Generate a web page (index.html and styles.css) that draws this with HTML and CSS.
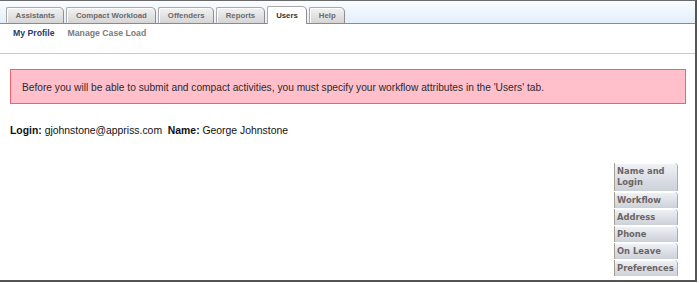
FILE: index.html
```html
<!DOCTYPE html>
<html>
<head>
<meta charset="utf-8">
<link rel="stylesheet" href="styles.css">
</head>
<body>
<div class="frame">
  <div class="tabbar">
    <div class="tab">Assistants</div>
    <div class="tab">Compact Workload</div>
    <div class="tab">Offenders</div>
    <div class="tab">Reports</div>
    <div class="tab active">Users</div>
    <div class="tab">Help</div>
  </div>
  <div class="subnav">
    <span class="sub current">My Profile</span>
    <span class="sub">Manage Case Load</span>
  </div>
  <div class="content">
    <div class="alert">Before you will be able to submit and compact activities, you must specify your workflow attributes in the 'Users' tab.</div>
    <div class="login"><b>Login:</b> gjohnstone@appriss.com&nbsp; <b>Name:</b> George Johnstone</div>
    <div class="sidewrap">
      <div class="sidetabs">
        <div class="stab two">Name and<br>Login</div>
        <div class="stab">Workflow</div>
        <div class="stab">Address</div>
        <div class="stab">Phone</div>
        <div class="stab">On Leave</div>
        <div class="stab">Preferences</div>
      </div>
    </div>
  </div>
</div>
</body>
</html>
```
FILE: styles.css
```css
html, body {
  margin: 0;
  padding: 0;
  background: #ffffff;
}
body {
  font-family: "Liberation Sans", Arial, sans-serif;
  color: #222;
}
.frame {
  width: 695px;
  height: 279px;
  border-top: 1px solid #6a6a6a;
  border-right: 2px solid #555555;
  border-bottom: 2px solid #555555;
  overflow: hidden;
}
.tabbar {
  height: 22px;
  border-bottom: 1px solid #8a8a8a;
  background: linear-gradient(#fbfdff, #e3eefb);
  display: flex;
  align-items: flex-end;
  gap: 2px;
  padding-left: 6px;
}
.tab {
  height: 15px;
  line-height: 15px;
  padding: 0 8.5px;
  border: 1px solid #a9a9a9;
  border-bottom: none;
  border-right-color: #8f8f8f;
  border-radius: 2px 5px 0 0;
  background: linear-gradient(#f2f2f2, #d5d5d5);
  box-shadow: inset 1px 1px 0 #ffffff;
  font-size: 7.8px;
  font-weight: bold;
  color: #6b6b6b;
  white-space: nowrap;
}
.tab.active {
  height: 17px;
  margin-bottom: -1px;
  background: #ffffff;
  color: #333333;
  line-height: 17px;
}
.subnav {
  padding: 3px 0 14px 13px;
  display: flex;
  gap: 13px;
  border-bottom: 1px solid #cdc8b9;
  line-height: 12px;
  font-size: 8.7px;
  font-weight: bold;
}
.sub {
  color: #7b7b7b;
}
.sub.current {
  color: #263a6c;
}
.content {
  padding: 15px 9px 0 10px;
}
.alert {
  background: #ffc0cb;
  border: 1px solid #e9646c;
  padding: 10.5px 11px 9.5px 11px;
  font-size: 10.2px;
  line-height: 13px;
  color: #2b2b2b;
}
.login {
  margin-top: 20px;
  font-size: 10.4px;
  line-height: 13px;
  color: #111;
}
.sidewrap {
  display: flex;
  justify-content: flex-end;
  padding-right: 8px;
  margin-top: 26px;
}
.sidetabs {
  display: flex;
  flex-direction: column;
  gap: 1px;
  width: 64px;
}
.stab {
  height: 16px;
  line-height: 16px;
  padding: 0 2px;
  border-left: 1px solid #a39d92;
  border-right: 1px solid #a8adb4;
  border-radius: 0 4px 0 0;
  background: linear-gradient(#f0f2f6, #ccd1d8);
  box-shadow: inset 0 1px 0 #ffffff;
  font-family: "DejaVu Sans", Verdana, sans-serif;
  font-size: 8.4px;
  font-weight: bold;
  color: #6d6464;
  white-space: nowrap;
}
.stab.two {
  height: 21.4px;
  line-height: 10.7px;
  padding-top: 3px;
  padding-bottom: 3.3px;
}
```
